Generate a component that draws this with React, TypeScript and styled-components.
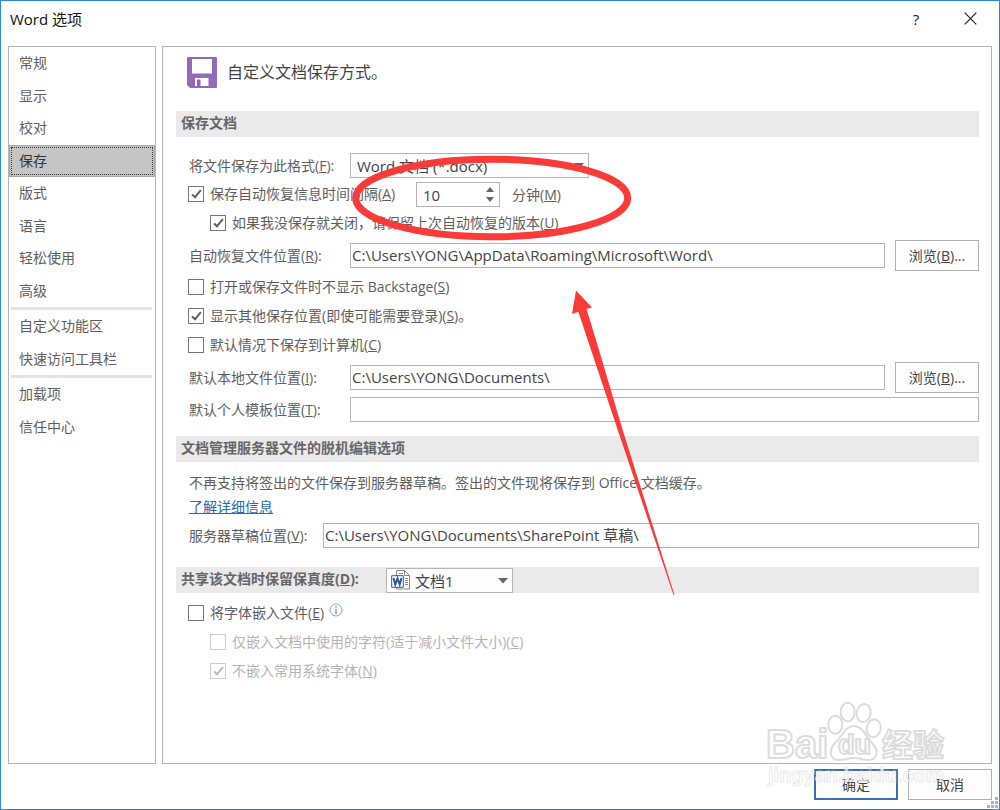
import React from "react";
import styled, { createGlobalStyle } from "styled-components";

const GlobalStyle = createGlobalStyle`
  *, *::before, *::after { box-sizing: border-box; }
  body {
    margin: 0;
    background: #fff;
    color: #5e5e5e;
    font: 14px/20px "Open Sans", "Noto Sans CJK SC", sans-serif;
  }
  button, input, select { font: inherit; color: inherit; margin: 0; }
`;

const Window = styled.div`
  position: relative;
  display: flex;
  flex-direction: column;
  min-height: 100vh;
  border: 1px solid #2b88d8;
  overflow: hidden;
`;

const TitleBar = styled.header`
  display: flex;
  align-items: center;
  height: 45px;
  padding: 0 16px 10px 9px;
`;

const Title = styled.h1`
  flex: 1;
  margin: 0;
  font-size: 15px;
  font-weight: 400;
  color: #111;
`;

const CaptionButton = styled.button`
  display: flex;
  align-items: center;
  justify-content: center;
  width: 26px;
  height: 26px;
  margin-left: 28px;
  padding: 0;
  border: 0;
  background: none;
  color: #222;
  font-size: 15px;
`;

const Body = styled.div`
  display: flex;
  flex: 1;
  gap: 6px;
  padding: 0 7px;
`;

const Sidebar = styled.nav`
  flex: 0 0 148px;
  border: 1px solid #b4b4b4;
`;

const NavGroup = styled.ul<{ $height: number }>`
  display: flex;
  flex-direction: column;
  height: ${(p) => p.$height}px;
  margin: 0;
  padding: 0;
  list-style: none;
`;

const NavDivider = styled.div`
  height: 3px;
  margin: 0 3px 0 2px;
  background: #e4e4e4;
`;

const NavItem = styled.li`
  display: flex;
  flex: 1;
`;

const NavButton = styled.button<{ $selected: boolean }>`
  flex: 1;
  padding: 0 10px;
  border: ${(p) => (p.$selected ? "1px solid #a6a6a6" : "0")};
  padding-left: ${(p) => (p.$selected ? 9 : 10)}px;
  background: ${(p) => (p.$selected ? "#c5c5c5" : "none")};
  outline: ${(p) => (p.$selected ? "1px dotted #333" : "none")};
  outline-offset: -3px;
  color: ${(p) => (p.$selected ? "#333" : "#5e5e5e")};
  text-align: left;
`;

const Main = styled.main`
  flex: 1;
  min-width: 0;
  padding: 10px 12px 24px 13px;
  border: 1px solid #b4b4b4;
`;

const Intro = styled.div`
  display: flex;
  align-items: center;
  gap: 10px;
  height: 30px;
  margin-bottom: 24px;
  padding-left: 11px;
  color: #444;
  font-size: 16px;
`;

const SectionBar = styled.h2`
  display: flex;
  align-items: center;
  gap: 27px;
  height: 26px;
  margin: 0;
  padding-left: 5px;
  background: #eaeaea;
  font-size: 14px;
  font-weight: 700;
  line-height: 24px;
  color: #666;

  & > span,
  & > label {
    padding-bottom: 2px;
  }
`;

const Rows = styled.div<{ $top: number; $bottom: number }>`
  display: flex;
  flex-direction: column;
  gap: 4px;
  padding: ${(p) => p.$top}px 0 ${(p) => p.$bottom}px 12px;
`;

const Row = styled.div<{ $tall?: boolean; $indent?: boolean; $disabled?: boolean }>`
  display: flex;
  align-items: center;
  height: ${(p) => (p.$tall ? 31 : 25)}px;
  padding-left: ${(p) => (p.$indent ? 22 : 0)}px;
  color: ${(p) => (p.$disabled ? "#b4b4b4" : "inherit")};
`;

const FieldLabel = styled.label<{ $width: number }>`
  flex: 0 0 ${(p) => p.$width}px;
  padding-left: 1px;
  white-space: nowrap;
`;

const CheckLabel = styled.label<{ $width?: number }>`
  display: flex;
  align-items: center;
  gap: 6px;
  width: ${(p) => (p.$width ? `${p.$width}px` : "auto")};
  padding-bottom: 1px;
  white-space: nowrap;
`;

const CheckBox = styled.input`
  appearance: none;
  display: grid;
  place-content: center;
  flex: none;
  width: 16px;
  height: 16px;
  border: 1px solid #777;
  background: #fff;

  &:checked::after {
    content: "";
    width: 5px;
    height: 10px;
    margin-bottom: 2px;
    border: solid #5e5e5e;
    border-width: 0 2px 2px 0;
    transform: rotate(40deg);
  }
  &:disabled { border-color: #ccc; }
  &:disabled::after { border-color: #bbb; }
`;

const TextField = styled.input`
  flex: 1;
  min-width: 0;
  height: 25px;
  padding: 0 0 2px 1px;
  border: 1px solid #b4b4b4;
  background: #fff;
  color: #444;
  font-size: 15px;
  outline: 0;
`;

const PushButton = styled.button<{ $primary?: boolean; $gap?: boolean }>`
  width: 84px;
  height: 31px;
  margin-left: ${(p) => (p.$gap ? 10 : 0)}px;
  padding: 0;
  border: ${(p) => (p.$primary ? "2px solid #3f6db5" : "1px solid #b0b0b0")};
  background: #fdfdfd;
  color: #444;
`;

const SelectWrap = styled.div<{ $width: number }>`
  position: relative;
  display: flex;
  align-items: center;
  width: ${(p) => p.$width}px;
  height: 25px;
  border: 1px solid #b4b4b4;
  background: #fdfdfd;
  color: #444;
  font-size: 15px;
  font-weight: 400;
`;

const Select = styled.select`
  appearance: none;
  flex: 1;
  min-width: 0;
  height: 23px;
  padding: 0 20px 0 6px;
  border: 0;
  background: none;
  outline: 0;
`;

const SelectIcon = styled.svg`
  flex: none;
  margin: 0 -2px 0 4px;
`;

const SelectArrow = styled.svg`
  position: absolute;
  right: 4px;
  top: 9px;
  pointer-events: none;
`;

const Spinner = styled.div`
  display: flex;
  width: 84px;
  height: 25px;
  margin-right: 12px;
  border: 1px solid #b4b4b4;
  background: #fff;
`;

const SpinnerValue = styled.input`
  flex: 1;
  width: 60px;
  padding: 0 0 0 6px;
  border: 0;
  background: none;
  color: #444;
  font-size: 15px;
  outline: 0;
`;

const SpinnerSteps = styled.div`
  display: flex;
  flex-direction: column;
  justify-content: center;
  gap: 5px;
  width: 13px;
`;

const StepButton = styled.button`
  display: flex;
  padding: 0;
  border: 0;
  background: none;
`;

const Copy = styled.p`
  margin: 0;
  padding-left: 1px;
  line-height: 24px;
`;

const Link = styled.a`
  color: #2a6ab0;
  text-decoration: underline;
`;

const InfoIcon = styled.svg`
  margin: 0 0 7px 5px;
`;

const Footer = styled.footer`
  display: flex;
  justify-content: flex-end;
  gap: 10px;
  padding: 5px 7px 9px;
`;

const Grip = styled.svg`
  position: absolute;
  right: 1px;
  bottom: 1px;
`;

const Markup = styled.svg`
  position: absolute;
  top: -1px;
  left: -1px;
  pointer-events: none;
`;

const Watermark = styled.svg`
  position: absolute;
  right: 49px;
  bottom: 9px;
  pointer-events: none;
`;

const navGroups = [
  { height: 260, items: ["常规", "显示", "校对", "保存", "版式", "语言", "轻松使用", "高级"] },
  { height: 65, items: ["自定义功能区", "快速访问工具栏"] },
  { height: 65, items: ["加载项", "信任中心"] },
];

const DownArrow = () => (
  <SelectArrow width="10" height="6" viewBox="0 0 10 6">
    <path d="M0 0h10L5 5.5z" fill="#666" />
  </SelectArrow>
);

type CheckProps = {
  children: React.ReactNode;
  checked?: boolean;
  disabled?: boolean;
  width?: number;
};

const Check = ({ children, checked, disabled, width }: CheckProps) => (
  <CheckLabel $width={width}>
    <CheckBox type="checkbox" defaultChecked={checked} disabled={disabled} />
    <span>{children}</span>
  </CheckLabel>
);

export default function App() {
  return (
    <>
      <GlobalStyle />
      <Window>
        <TitleBar>
          <Title>Word 选项</Title>
          <CaptionButton aria-label="帮助">?</CaptionButton>
          <CaptionButton aria-label="关闭">
            <svg width="13" height="13" viewBox="0 0 13 13" stroke="#222" strokeWidth="1.2">
              <path d="M.7.7l11.6 11.6M12.3.7L.7 12.3" />
            </svg>
          </CaptionButton>
        </TitleBar>

        <Body>
          <Sidebar>
            {navGroups.map((group, index) => (
              <React.Fragment key={group.items[0]}>
                {index > 0 && <NavDivider />}
                <NavGroup $height={group.height}>
                  {group.items.map((item) => (
                    <NavItem key={item}>
                      <NavButton $selected={item === "保存"}>{item}</NavButton>
                    </NavItem>
                  ))}
                </NavGroup>
              </React.Fragment>
            ))}
          </Sidebar>

          <Main>
            <Intro>
              <svg width="30" height="31" viewBox="0 0 30 31">
                <path d="M1 0h28a1 1 0 0 1 1 1v29a1 1 0 0 1-1 1H3l-3-3V1a1 1 0 0 1 1-1z" fill="#9668b8" />
                <path d="M5 2h20v14.500H5z" fill="#fff" />
                <path d="M8 21h13.500v8H8z" fill="#fff" />
                <path d="M10 22.500h3.500V29H10z" fill="#9668b8" />
              </svg>
              <span>自定义文档保存方式。</span>
            </Intro>

            <SectionBar><span>保存文档</span></SectionBar>
            <Rows $top={16} $bottom={14}>
              <Row>
                <FieldLabel $width={162} htmlFor="format">将文件保存为此格式(<u>F</u>):</FieldLabel>
                <SelectWrap $width={239}>
                  <Select id="format"><option>Word 文档 (*.docx)</option></Select>
                  <DownArrow />
                </SelectWrap>
              </Row>
              <Row>
                <Check checked width={228}>保存自动恢复信息时间间隔(<u>A</u>)</Check>
                <Spinner>
                  <SpinnerValue id="minutes" type="text" inputMode="numeric" defaultValue="10" />
                  <SpinnerSteps>
                    <StepButton aria-label="增加">
                      <svg width="8" height="5" viewBox="0 0 8 5"><path d="M0 5h8L4 0z" fill="#666" /></svg>
                    </StepButton>
                    <StepButton aria-label="减少">
                      <svg width="8" height="5" viewBox="0 0 8 5"><path d="M0 0h8L4 5z" fill="#666" /></svg>
                    </StepButton>
                  </SpinnerSteps>
                </Spinner>
                <label htmlFor="minutes">分钟(<u>M</u>)</label>
              </Row>
              <Row $indent>
                <Check checked>如果我没保存就关闭，请保留上次自动恢复的版本(<u>U</u>)</Check>
              </Row>
              <Row $tall>
                <FieldLabel $width={162} htmlFor="recover">自动恢复文件位置(<u>R</u>):</FieldLabel>
                <TextField id="recover" defaultValue={"C:\\Users\\YONG\\AppData\\Roaming\\Microsoft\\Word\\"} />
                <PushButton $gap>浏览(<u>B</u>)...</PushButton>
              </Row>
              <Row><Check>打开或保存文件时不显示 Backstage(<u>S</u>)</Check></Row>
              <Row><Check checked>显示其他保存位置(即使可能需要登录)(<u>S</u>)。</Check></Row>
              <Row><Check>默认情况下保存到计算机(<u>C</u>)</Check></Row>
              <Row $tall>
                <FieldLabel $width={162} htmlFor="local">默认本地文件位置(<u>I</u>):</FieldLabel>
                <TextField id="local" defaultValue={"C:\\Users\\YONG\\Documents\\"} />
                <PushButton $gap>浏览(<u>B</u>)...</PushButton>
              </Row>
              <Row>
                <FieldLabel $width={162} htmlFor="template">默认个人模板位置(<u>T</u>):</FieldLabel>
                <TextField id="template" />
              </Row>
            </Rows>

            <SectionBar><span>文档管理服务器文件的脱机编辑选项</span></SectionBar>
            <Rows $top={9} $bottom={19}>
              <div>
                <Copy>不再支持将签出的文件保存到服务器草稿。签出的文件现将保存到 Office 文档缓存。</Copy>
                <Copy><Link href="#details">了解详细信息</Link></Copy>
              </div>
              <Row>
                <FieldLabel $width={135} htmlFor="drafts">服务器草稿位置(<u>V</u>):</FieldLabel>
                <TextField id="drafts" defaultValue={"C:\\Users\\YONG\\Documents\\SharePoint 草稿\\"} />
              </Row>
            </Rows>

            <SectionBar>
              <label htmlFor="document">共享该文档时保留保真度(<u>D</u>):</label>
              <SelectWrap $width={127}>
                <SelectIcon width="20" height="20" viewBox="0 0 20 20">
                  <path d="M5.500.500h8l5 5v13.500h-13z" fill="#fff" stroke="#888" />
                  <path d="M13.500.500v5h5M14 8.500h3M14 10.500h3M14 12.500h3M14 14.500h3M8 3.500h4" fill="none" stroke="#888" />
                  <path d="M.700 5.700h11.600v11.600H.700z" fill="#fff" stroke="#2b579a" />
                  <path d="M2.500 8l1.800 6.500 2.200-6 2.200 6L10.500 8" fill="none" stroke="#2b579a" strokeWidth="2" />
                </SelectIcon>
                <Select id="document"><option>文档1</option></Select>
                <DownArrow />
              </SelectWrap>
            </SectionBar>
            <Rows $top={8} $bottom={0}>
              <Row>
                <Check>将字体嵌入文件(<u>E</u>)</Check>
                <InfoIcon width="14" height="14" viewBox="0 0 14 14" fill="none" stroke="#7fa6dc">
                  <circle cx="7" cy="7" r="6" />
                  <path d="M7 3.200v1.500M7 6v5" stroke="#3568b0" />
                </InfoIcon>
              </Row>
              <Row $indent $disabled><Check disabled>仅嵌入文档中使用的字符(适于减小文件大小)(<u>C</u>)</Check></Row>
              <Row $indent $disabled><Check checked disabled>不嵌入常用系统字体(<u>N</u>)</Check></Row>
            </Rows>
          </Main>
        </Body>

        <Footer>
          <PushButton $primary>确定</PushButton>
          <PushButton>取消</PushButton>
        </Footer>

        <Grip width="11" height="11" viewBox="0 0 11 11" fill="#b0b0b0">
          <path d="M8 0h3v3H8zM4 4h3v3H4zM8 4h3v3H8zM0 8h3v3H0zM4 8h3v3H4zM8 8h3v3H8z" />
        </Grip>

        <Watermark width="190" height="104" viewBox="760 696 190 104" fill="#fff" stroke="#dcdcdc" strokeWidth="2">
          <ellipse cx="835.300" cy="724.700" rx="7" ry="9" />
          <ellipse cx="847.700" cy="712" rx="7" ry="9.300" />
          <ellipse cx="863.700" cy="713" rx="7" ry="9" transform="rotate(10 863.700 713)" />
          <ellipse cx="873.700" cy="728.300" rx="7" ry="9" transform="rotate(10 873.700 728.300)" />
          <path d="M854 726c9 0 11 10 18 17 8 8 5 17-4 17-6 0-8-2-14-2s-9 2-15 2c-9 0-11-9-4-17 8-7 10-17 19-17z" />
          <g fontFamily="'Liberation Sans', 'Noto Sans CJK SC', sans-serif" fontWeight="700">
            <text x="766" y="758" fontSize="40">Bai</text>
            <text x="838" y="754" fontSize="27">du</text>
            <text x="882" y="756" fontSize="31">经验</text>
            <text x="768" y="782" fontSize="20" fillOpacity=".7" strokeOpacity=".6" strokeWidth="1">jingyan.baidu.com</text>
          </g>
        </Watermark>

        <Markup width="1000" height="810" viewBox="0 0 1000 810">
          <ellipse cx="491.700" cy="198" rx="136" ry="38.700" fill="none" stroke="#fb3b3a" strokeWidth="7" />
          <path d="M576 290.500L592 307.500 586.500 309 596 340 622.700 430 674.500 595 673.500 595 617.700 430 587.700 340 578.300 311.700 572 314z" fill="#fb3b3a" />
        </Markup>
      </Window>
    </>
  );
}
